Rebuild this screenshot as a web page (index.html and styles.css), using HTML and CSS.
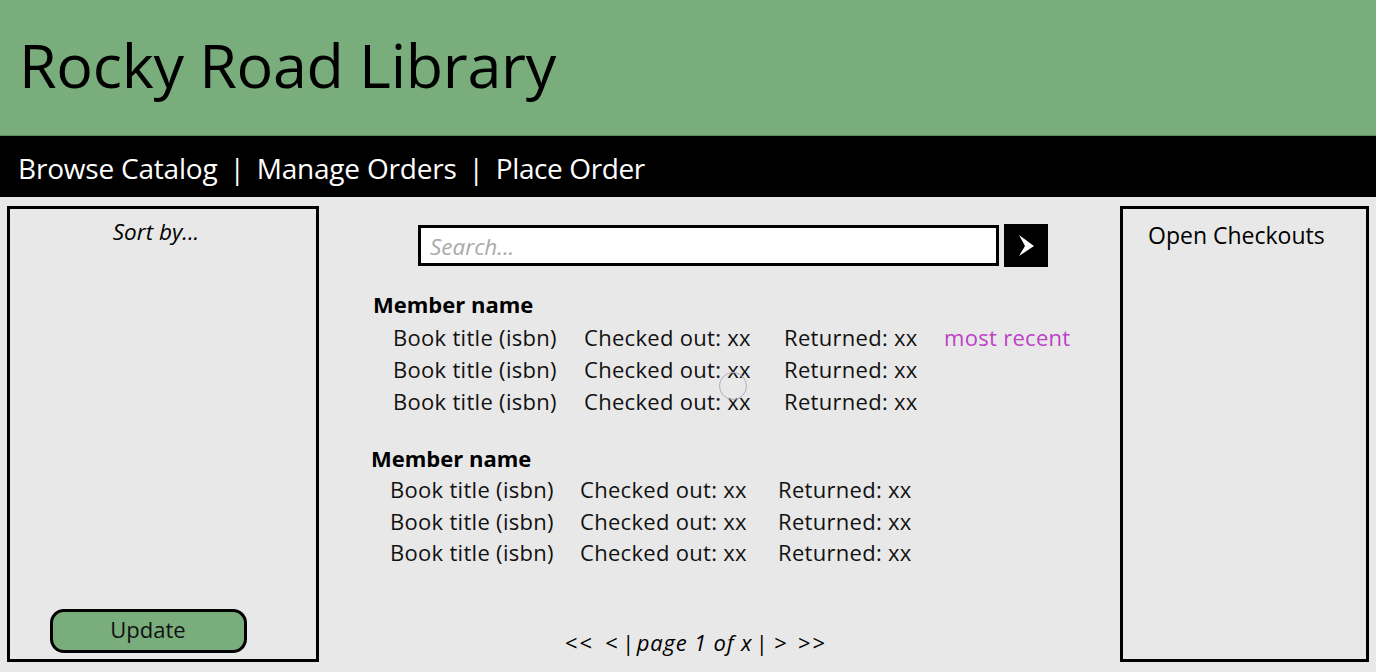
FILE: index.html
```html
<!DOCTYPE html>
<html>
<head>
<meta charset="utf-8">
<title>Rocky Road Library</title>
<link rel="stylesheet" href="styles.css">
</head>
<body>
<header class="banner">
  <h1 class="title">Rocky Road Library</h1>
</header>
<nav class="nav">
  <span>Browse Catalog</span><span class="sep">|</span><span>Manage Orders</span><span class="sep">|</span><span>Place Order</span>
</nav>
<main class="main">
  <aside class="panel left">
    <div class="sort">Sort by...</div>
    <button class="update">Update</button>
  </aside>
  <section class="center">
    <form class="search">
      <div class="search-box">Search...</div>
      <div class="search-btn">
        <svg width="16" height="22" viewBox="0 0 16 22"><polygon points="0,0 15,11 0,21 6,11" fill="#fff"/></svg>
      </div>
    </form>
    <div class="group g1">
      <div class="member">Member name</div>
      <div class="row"><span class="c1">Book title (isbn)</span><span class="c2">Checked out: xx</span><span class="c3">Returned: xx</span><span class="recent">most recent</span></div>
      <div class="row"><span class="c1">Book title (isbn)</span><span class="c2">Checked out: xx</span><span class="c3">Returned: xx</span></div>
      <div class="row"><span class="c1">Book title (isbn)</span><span class="c2">Checked out: xx</span><span class="c3">Returned: xx</span></div>
      <div class="cursor"></div>
    </div>
    <div class="group g2">
      <div class="member">Member name</div>
      <div class="row"><span class="c1">Book title (isbn)</span><span class="c2">Checked out: xx</span><span class="c3">Returned: xx</span></div>
      <div class="row"><span class="c1">Book title (isbn)</span><span class="c2">Checked out: xx</span><span class="c3">Returned: xx</span></div>
      <div class="row"><span class="c1">Book title (isbn)</span><span class="c2">Checked out: xx</span><span class="c3">Returned: xx</span></div>
    </div>
    <div class="pager">
      <span class="p-first">&lt;&lt;</span>
      <span class="p-prev">&lt;</span>
      <span class="p-bar1">|</span>
      <span class="p-page">page 1 of x</span>
      <span class="p-bar2">|</span>
      <span class="p-next">&gt;</span>
      <span class="p-last">&gt;&gt;</span>
    </div>
  </section>
  <aside class="panel right">
    <div class="open">Open Checkouts</div>
  </aside>
</main>
</body>
</html>
```
FILE: styles.css
```css
html, body {
  margin: 0;
  padding: 0;
}
body {
  background: #e8e8e8;
  font-family: "Open Sans", "Noto Sans", sans-serif;
  color: #000;
  width: 1376px;
  height: 672px;
  overflow: hidden;
}
.banner {
  background: #79ad7c;
  height: 136px;
  border-bottom: 1px solid #5f8c62;
  box-sizing: border-box;
  display: flex;
  align-items: center;
  padding-left: 19px;
}
.title {
  margin: 0;
  font-weight: 400;
  font-size: 61px;
  letter-spacing: -0.3px;
  line-height: 1;
  position: relative;
  top: -3px;
}
.nav {
  background: #000;
  color: #fff;
  height: 61px;
  box-sizing: border-box;
  padding-top: 3px;
  display: flex;
  align-items: center;
  padding-left: 18px;
  font-size: 28px;
  letter-spacing: -0.2px;
}
.nav .sep {
  margin: 0 12px;
}
.nav span:last-child {
  letter-spacing: -0.4px;
}
.main {
  display: grid;
  grid-template-columns: 312px 1fr 249px;
  height: 456px;
  margin: 9px 7px 0 7px;
}
.panel {
  border: 3px solid #000;
  box-sizing: border-box;
  display: flex;
  flex-direction: column;
}
.left {
  align-items: center;
}
.sort {
  font-style: italic;
  font-size: 22.5px;
  margin-top: 7px;
  margin-left: -14px;
}
.update {
  margin-top: auto;
  margin-bottom: 6px;
  margin-right: 30px;
  width: 197px;
  height: 44px;
  background: #79ad7c;
  border: 3px solid #000;
  border-radius: 14px;
  font-family: "Open Sans", "Noto Sans", sans-serif;
  font-size: 22px;
  color: #111;
  padding: 0 0 4px 0;
}
.right .open {
  font-size: 23px;
  margin: 10px 0 0 25px;
}
.center {
  position: relative;
  display: flex;
  flex-direction: column;
  padding-left: 52px;
}
.search {
  display: flex;
  margin: 19px 0 0 47px;
  gap: 5px;
}
.search-box {
  width: 581px;
  height: 41px;
  box-sizing: border-box;
  border: 3px solid #000;
  background: #fff;
  color: #aaa;
  font-style: italic;
  font-size: 22.5px;
  padding-left: 9px;
  line-height: 38px;
}
.search-btn {
  width: 44px;
  height: 43px;
  margin-top: -1px;
  background: #000;
  display: flex;
  align-items: center;
  justify-content: center;
  padding-left: 2px;
  box-sizing: border-box;
}
.group {
  position: relative;
  font-size: 22px;
}
.g1 {
  margin-top: 20px;
  margin-left: 2px;
}
.g2 {
  margin-top: 26px;
}
.member {
  font-weight: 700;
  line-height: 34px;
}
.g2 .member {
  line-height: 31px;
}
.row {
  display: flex;
  line-height: 32px;
  padding-left: 20px;
  color: #111;
  letter-spacing: 0.3px;
}
.g2 .row {
  line-height: 31.5px;
  padding-left: 19px;
}
.c1 { width: 191px; }
.c2 { width: 200px; }
.c3 { width: 160px; }
.g2 .c1 { width: 190px; }
.g2 .c2 { width: 198px; }
.recent { color: #c040c8; }
.cursor {
  position: absolute;
  left: 346px;
  top: 85px;
  width: 28px;
  height: 28px;
  box-sizing: border-box;
  border: 1px solid #b0b0c0;
  border-radius: 50%;
}
.pager {
  margin-top: auto;
  margin-bottom: 5px;
  align-self: flex-start;
  margin-left: 194px;
  font-size: 22px;
  display: flex;
  align-items: baseline;
  color: #000;
}
.p-first, .p-last { letter-spacing: 2px; }
.p-prev { margin-left: 11px; }
.p-bar1 { font-style: italic; margin-left: 4px; margin-right: 3px; }
.p-page { font-style: italic; letter-spacing: 0.8px; }
.p-bar2 { font-style: italic; margin-left: 3px; }
.p-next { margin-left: 7px; }
.p-last { margin-left: 11px; }
```
